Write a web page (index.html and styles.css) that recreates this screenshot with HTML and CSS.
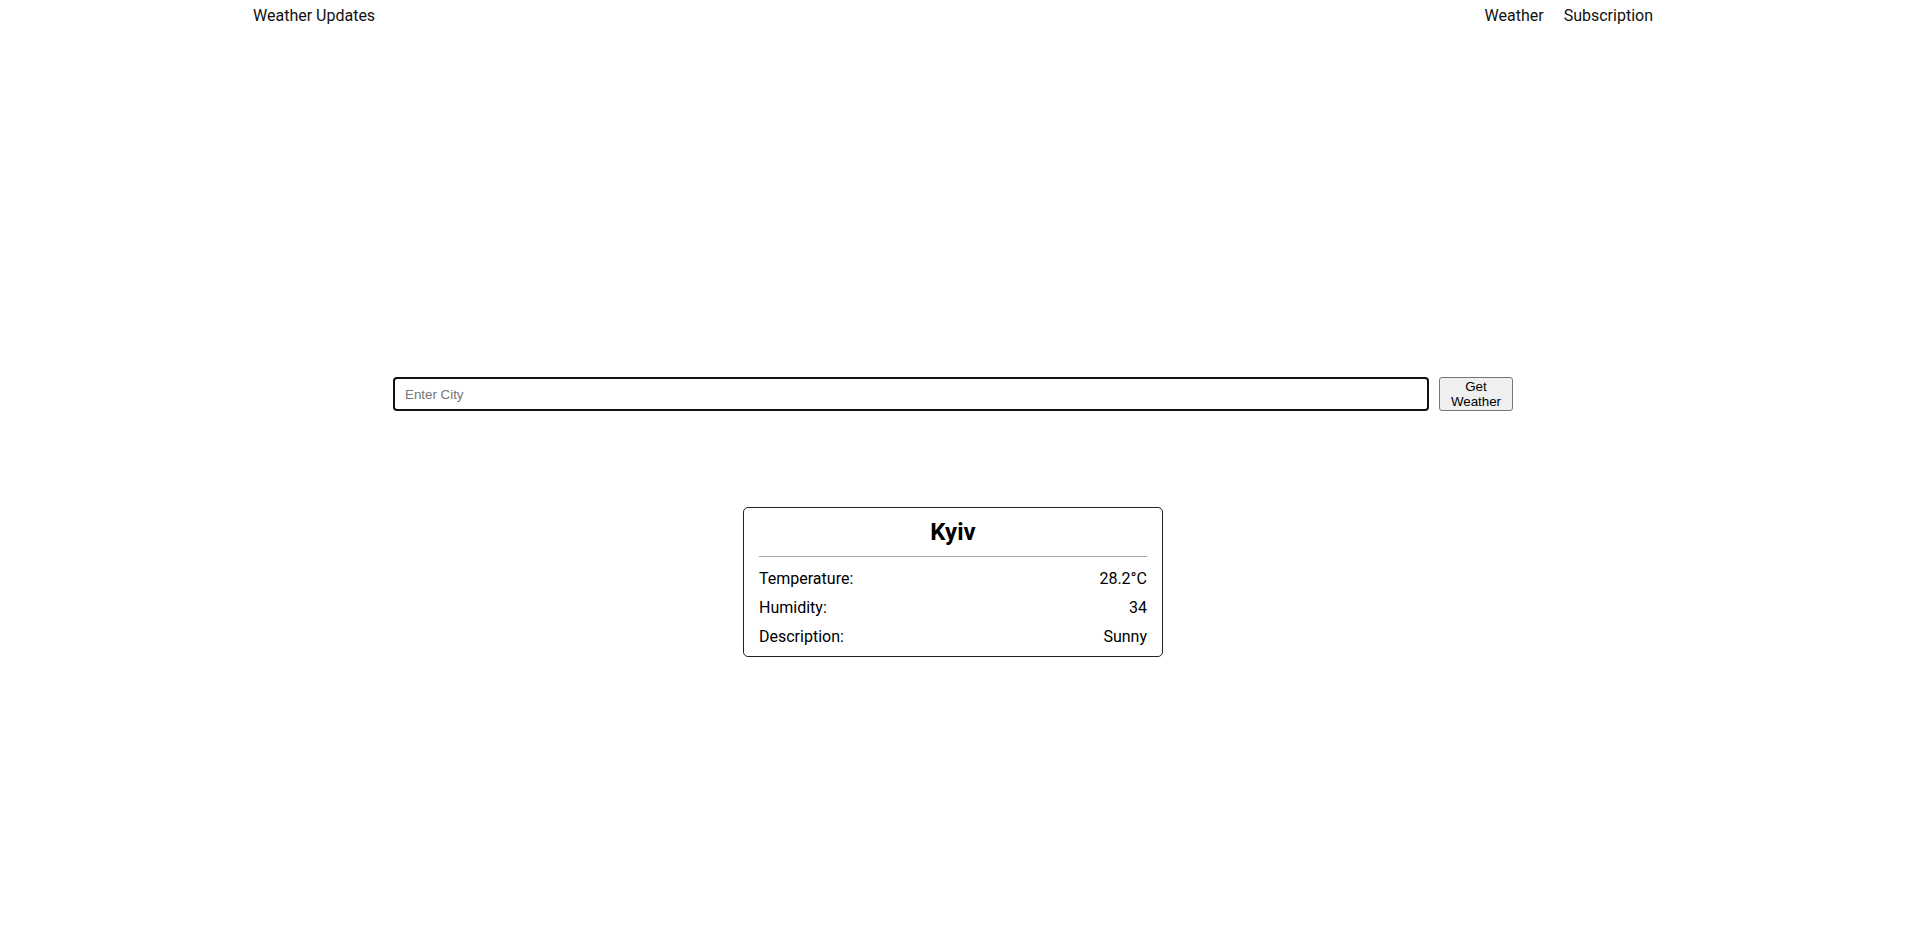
FILE: index.html
```html
<!DOCTYPE html>
<html lang="en">
<head>
<meta charset="utf-8">
<title>Weather Updates</title>
<link rel="stylesheet" href="styles.css">
</head>
<body>
<div class="page">
  <header class="nav">
    <div class="brand">Weather Updates</div>
    <nav class="links">
      <a href="#" class="link">Weather</a>
      <a href="#" class="link">Subscription</a>
    </nav>
  </header>
  <main class="main">
    <form class="search">
      <input class="city" type="text" placeholder="Enter City">
      <button class="get" type="button">Get Weather</button>
    </form>
    <section class="card">
      <h2 class="city-name">Kyiv</h2>
      <div class="rows">
        <div class="row"><span>Temperature:</span><span>28.2°C</span></div>
        <div class="row"><span>Humidity:</span><span>34</span></div>
        <div class="row"><span>Description:</span><span>Sunny</span></div>
      </div>
    </section>
  </main>
</div>
</body>
</html>
```

FILE: styles.css
```css
* { box-sizing: border-box; }
html, body { margin: 0; padding: 0; background: #fff; }
body {
  font-family: Roboto, "Liberation Sans", Arial, sans-serif;
  font-size: 16px;
  color: #000;
}
.page {
  padding-right: 7px;
}
.nav {
  width: 1400px;
  margin: 0 auto;
  padding: 6px 0 4px;
  display: flex;
  justify-content: space-between;
  align-items: center;
  line-height: 19px;
  color: #111;
}
.links {
  display: flex;
  gap: 20px;
}
.link {
  color: #111;
  text-decoration: none;
}
.main {
  display: flex;
  flex-direction: column;
  align-items: center;
  padding-top: 348px;
}
.search {
  width: 1120px;
  display: flex;
  gap: 10px;
  margin: 0;
}
.city {
  flex: 1;
  height: 34px;
  border: 2px solid #111;
  border-radius: 4px;
  padding: 0 10px;
  font-family: "Liberation Sans", Arial, sans-serif;
  font-size: 13.33px;
  outline: none;
}
.city::placeholder { color: #757575; }
.get {
  width: 74px;
  height: 34px;
  background: #efefef;
  border: 1px solid #767676;
  border-radius: 3px;
  padding: 0 6px;
  font-family: "Liberation Sans", Arial, sans-serif;
  font-size: 13.33px;
  line-height: 15px;
  color: #000;
}
.card {
  width: 420px;
  margin-top: 96px;
  border: 1px solid #222;
  border-radius: 5px;
  padding: 10px 15px 10px;
}
.city-name {
  margin: 0 0 10px;
  font-size: 24px;
  font-weight: 700;
  line-height: 28px;
  text-align: center;
}
.rows {
  border-top: 1px solid #a8a8a8;
  padding-top: 12px;
  display: flex;
  flex-direction: column;
  gap: 10px;
}
.row {
  display: flex;
  justify-content: space-between;
  line-height: 19px;
}
```
